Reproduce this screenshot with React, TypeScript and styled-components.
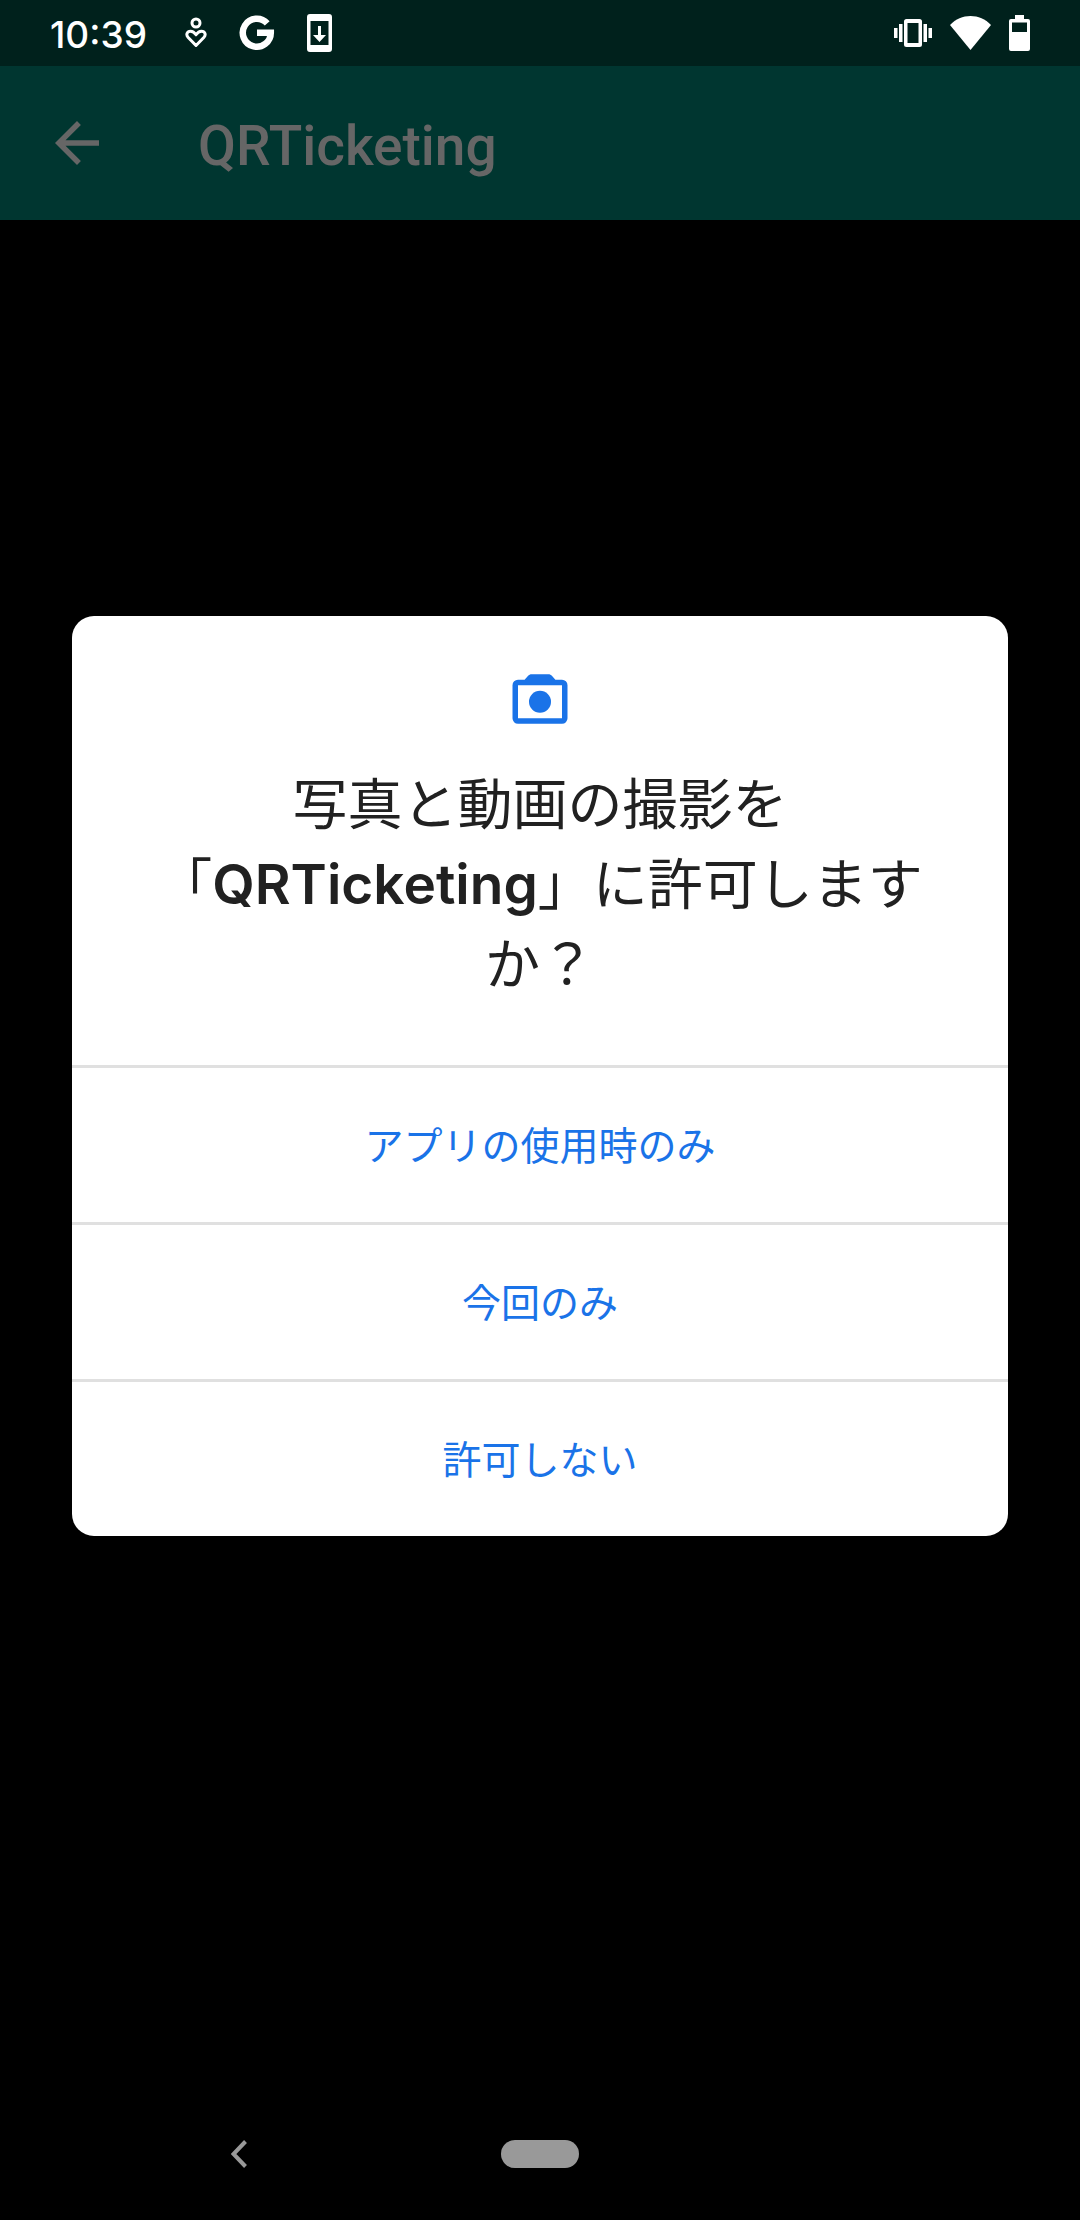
import React from "react";
import styled, { createGlobalStyle } from "styled-components";

const GlobalStyle = createGlobalStyle`
  *, *::before, *::after { box-sizing: border-box; }
  body { margin: 0; background: #000; }
  button { margin: 0; padding: 0; border: 0; background: none; font: inherit; color: inherit; cursor: pointer; }
`;

const Screen = styled.div`
  display: flex;
  flex-direction: column;
  min-height: 100vh;
  background: #000;
  font-family: Roboto, "Noto Sans CJK JP", sans-serif;
`;

const StatusBar = styled.header`
  display: flex;
  align-items: center;
  justify-content: space-between;
  height: 66px;
  padding: 0 50px;
  background: #00211c;
  color: #fff;
`;

const StatusGroup = styled.div<{ $gap: number }>`
  display: flex;
  align-items: center;
  gap: ${({ $gap }) => $gap}px;
`;

const Clock = styled.time`
  min-width: 103px;
  padding-top: 4px;
  font: 500 37px/48px Inter, sans-serif;
`;

const AppBar = styled.div`
  display: flex;
  align-items: center;
  gap: 88px;
  height: 154px;
  padding: 0 44px;
  background: #003630;
  color: #666;
`;

const IconButton = styled.button`
  display: flex;
  align-items: center;
  justify-content: center;
`;

const AppTitle = styled.h1`
  margin: 0;
  padding-top: 6px;
  font-size: 55px;
  line-height: 64px;
  font-weight: 500;
`;

const Stage = styled.main`
  display: flex;
  flex: 1;
  align-items: center;
  justify-content: center;
  padding: 0 72px 156px;
`;

const Dialog = styled.section`
  width: 100%;
  overflow: hidden;
  border-radius: 22px;
  background: #fff;
`;

const DialogHeader = styled.div`
  display: flex;
  flex-direction: column;
  align-items: center;
  gap: 28px;
  padding: 50px 72px 65px;
`;

const Question = styled.h2`
  margin: 0;
  font-family: "Noto Sans CJK JP", sans-serif;
  font-size: 55px;
  line-height: 80px;
  font-weight: 400;
  text-align: center;
  color: #212121;
`;

const Phrase = styled.span`
  display: inline-block;
  vertical-align: top;
`;

const AppName = styled.strong`
  font-family: Inter, sans-serif;
  font-weight: 600;
  line-height: 1;
`;

const Choice = styled.button`
  display: block;
  width: 100%;
  height: 157px;
  padding-bottom: 4px;
  border-top: 3px solid #e0e0e0;
  font-family: "Noto Sans CJK JP", sans-serif;
  font-size: 39px;
  line-height: 56px;
  color: #1a73e8;
`;

const NavBar = styled.nav`
  display: grid;
  grid-template-columns: 1fr auto 1fr;
  align-items: center;
  height: 132px;
  color: #999;
`;

const BackSlot = styled.div`
  display: flex;
  justify-content: center;
  padding-right: 24px;
`;

const HomePill = styled.button`
  width: 78px;
  height: 28px;
  border-radius: 14px;
  background: #999;
`;

const WellbeingIcon = () => (
  <svg width="22" height="32" viewBox="0 0 22 32" fill="none" stroke="#fff" strokeWidth="3" aria-hidden="true">
    <circle cx="11" cy="6" r="4" />
    <path d="M11 28.500 L3.200 20.500 C0.500 17.500 2.200 14.200 5.500 14.200 C8 14.200 9.500 15.500 11 17.800 C12.500 15.500 14 14.200 16.500 14.200 C19.800 14.200 21.500 17.500 18.800 20.500 Z" strokeLinejoin="round" />
  </svg>
);

const GoogleIcon = () => (
  <svg width="36" height="36" viewBox="0 0 36 36" fill="none" stroke="#fff" strokeWidth="6.500" aria-hidden="true">
    <path d="M28.200 8.400 A14 14 0 1 0 31.800 17.800 H18" />
  </svg>
);

const UpdateIcon = () => (
  <svg width="25" height="38" viewBox="0 0 25 38" fill="#fff" aria-hidden="true">
    <path fillRule="evenodd" d="M3 0H22A3 3 0 0 1 25 3V35A3 3 0 0 1 22 38H3A3 3 0 0 1 0 35V3A3 3 0 0 1 3 0ZM3.500 7V31H21.500V7Z" />
    <path d="M11 12H14V21H19L12.500 28L6 21H11Z" />
  </svg>
);

const VibrateIcon = () => (
  <svg width="38" height="28" viewBox="0 0 38 28" fill="#fff" aria-hidden="true">
    <path fillRule="evenodd" d="M12.500 0H25.500A2.500 2.500 0 0 1 28 2.500V25.500A2.500 2.500 0 0 1 25.500 28H12.500A2.500 2.500 0 0 1 10 25.500V2.500A2.500 2.500 0 0 1 12.500 0ZM13.500 4V24H24.500V4Z" />
    <path d="M5 5H8.500V23H5ZM0 9H3.500V19H0ZM29.500 5H33V23H29.500ZM34.500 9H38V19H34.500Z" />
  </svg>
);

const WifiIcon = () => (
  <svg width="41" height="34" viewBox="0 0 41 34" fill="#fff" aria-hidden="true">
    <path d="M0 9C11-3 30-3 41 9L20.500 34Z" />
  </svg>
);

const BatteryIcon = () => (
  <svg width="21" height="36" viewBox="0 0 21 36" fill="#fff" aria-hidden="true">
    <path fillRule="evenodd" d="M6 0H15V4H19A2 2 0 0 1 21 6V34A2 2 0 0 1 19 36H2A2 2 0 0 1 0 34V6A2 2 0 0 1 2 4H6ZM3 7.500V17H18V7.500Z" />
  </svg>
);

const ArrowIcon = () => (
  <svg width="66" height="66" viewBox="0 0 24 24" fill="currentColor" aria-hidden="true">
    <path d="M20 11H7.830l5.590-5.590L12 4l-8 8 8 8 1.410-1.410L7.830 13H20v-2z" />
  </svg>
);

const CameraIcon = () => (
  <svg width="66" height="66" viewBox="0 0 24 24" fill="#1a73e8" aria-hidden="true">
    <path fillRule="evenodd" d="M9 3h6c.6 0 1 .2 1.400.6L17.600 5H20a2 2 0 0 1 2 2v12a2 2 0 0 1-2 2H4a2 2 0 0 1-2-2V7a2 2 0 0 1 2-2h2.400l1.200-1.400C8 3.200 8.400 3 9 3zM4 7v12h16V7z" />
    <circle cx="12" cy="13" r="4" />
  </svg>
);

const ChevronIcon = () => (
  <svg width="16" height="28" viewBox="0 0 16 28" fill="none" stroke="currentColor" strokeWidth="4" aria-hidden="true">
    <path d="M14.500 1.500L2.500 14L14.500 26.500" />
  </svg>
);

const choices = ["アプリの使用時のみ", "今回のみ", "許可しない"];

export default function App() {
  return (
    <Screen lang="ja">
      <GlobalStyle />
      <StatusBar>
        <StatusGroup $gap={32}>
          <Clock>10:39</Clock>
          <WellbeingIcon />
          <GoogleIcon />
          <UpdateIcon />
        </StatusGroup>
        <StatusGroup $gap={18}>
          <VibrateIcon />
          <WifiIcon />
          <BatteryIcon />
        </StatusGroup>
      </StatusBar>
      <AppBar>
        <IconButton aria-label="戻る">
          <ArrowIcon />
        </IconButton>
        <AppTitle>QRTicketing</AppTitle>
      </AppBar>
      <Stage>
        <Dialog role="dialog" aria-labelledby="question">
          <DialogHeader>
            <CameraIcon />
            <Question id="question">
              <Phrase>写真と動画の撮影を</Phrase>
              <Phrase>
                「<AppName>QRTicketing</AppName>」に許可します
              </Phrase>
              <Phrase>か？</Phrase>
            </Question>
          </DialogHeader>
          {choices.map((label) => (
            <Choice key={label}>{label}</Choice>
          ))}
        </Dialog>
      </Stage>
      <NavBar>
        <BackSlot>
          <IconButton aria-label="戻る">
            <ChevronIcon />
          </IconButton>
        </BackSlot>
        <HomePill aria-label="ホーム" />
      </NavBar>
    </Screen>
  );
}
